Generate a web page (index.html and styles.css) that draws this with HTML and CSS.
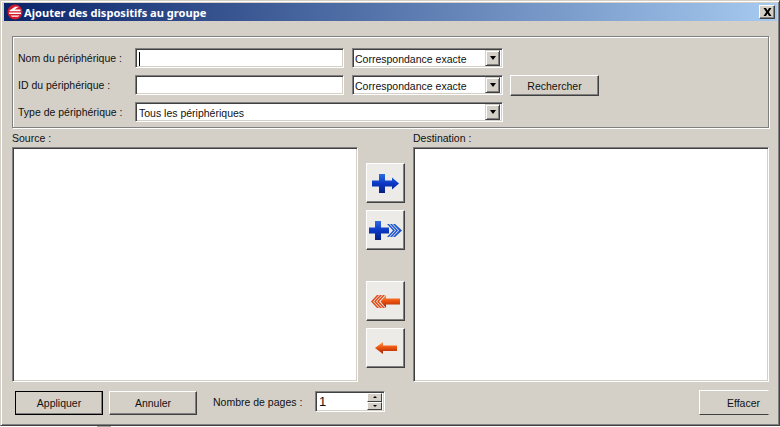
FILE: index.html
```html
<!DOCTYPE html>
<html lang="fr">
<head>
<meta charset="utf-8">
<title>Ajouter des dispositifs au groupe</title>
<link rel="stylesheet" href="styles.css">
</head>
<body>
<div class="window">
  <div class="titlebar">
    <svg class="appicon" width="16" height="16" viewBox="0 0 16 16">
      <circle cx="8" cy="8" r="7.5" fill="#d5182a"/>
      <path d="M2.500 6.500 L8 2.800 L12 2.800 L7.500 5.600 L13.500 5.600 L13.500 7.200 L2.500 7.200 Z M2 8.600 L14 8.600 L14 10 L2 10 Z M3.500 11.400 L12.500 11.400 L11 12.800 L5 12.800 Z" fill="#fff"/>
    </svg>
    <span class="title-text">Ajouter des dispositifs au groupe</span>
    <span class="closebtn">
      <svg width="9" height="8" viewBox="0 0 9 8"><path d="M0.500 0 L3 0 L4.500 2.400 L6 0 L8.500 0 L5.800 4 L8.500 8 L6 8 L4.500 5.600 L3 8 L0.500 8 L3.200 4 Z" fill="#000"/></svg>
    </span>
  </div>
  <div class="content">
    <div class="group">
      <div class="row">
        <label class="lbl">Nom du périphérique :</label>
        <div class="field edit"><span class="caret"></span></div>
        <div class="field combo"><span class="combo-text">Correspondance exacte</span><span class="drop"><i></i></span></div>
      </div>
      <div class="row">
        <label class="lbl">ID du périphérique :</label>
        <div class="field edit"></div>
        <div class="field combo"><span class="combo-text">Correspondance exacte</span><span class="drop"><i></i></span></div>
        <div class="btn search">Rechercher</div>
      </div>
      <div class="row">
        <label class="lbl">Type de périphérique :</label>
        <div class="field combo wide"><span class="combo-text">Tous les périphériques</span><span class="drop"><i></i></span></div>
      </div>
    </div>
    <div class="lists">
      <div class="pane source">
        <div class="pane-label">Source :</div>
        <div class="field listbox"></div>
      </div>
      <div class="arrows">
        <div class="btn arrow">
          <svg width="27" height="19" viewBox="0 0 27 19">
            <defs>
              <linearGradient id="b" x1="0" y1="0" x2="0" y2="1"><stop offset="0" stop-color="#2f6ce0"/><stop offset="0.5" stop-color="#0a38c4"/><stop offset="1" stop-color="#07207f"/></linearGradient>
              <linearGradient id="r" x1="0" y1="0" x2="0" y2="1"><stop offset="0" stop-color="#ff9a50"/><stop offset="0.45" stop-color="#ee5410"/><stop offset="1" stop-color="#9c2606"/></linearGradient>
            </defs>
            <path d="M7 0 H13 V6.500 H20 V3.500 L27 9.500 L20 15.500 V12.500 H13 V19 H7 V12.500 H0 V6.500 H7 Z" fill="url(#b)"/>
          </svg>
        </div>
        <div class="btn arrow">
          <svg width="33" height="19" viewBox="0 0 33 19">
            <path d="M6 0 H12 V6.500 H20 V12.500 H12 V19 H6 V12.500 H0 V6.500 H6 Z" fill="url(#b)"/>
            <path d="M18 3 L24 9.500 L18 16 H20 L26 9.500 L20 3 Z M21 3 L27 9.500 L21 16 H23 L29 9.500 L23 3 Z M24 3 L30 9.500 L24 16 H26 L33 9.500 L26 3 Z" fill="#1d55d0"/>
          </svg>
        </div>
        <div class="arrow-gap"></div>
        <div class="btn arrow">
          <svg width="29" height="13" viewBox="0 0 29 13">
            <path d="M6 0 H8 L2 6.500 L8 13 H6 L0 6.500 Z M9 0 H11 L5 6.500 L11 13 H9 L3 6.500 Z M12 0 H14 L8 6.500 L14 13 H12 L6 6.500 Z" fill="#e04a16"/>
            <path d="M15 0 L9.500 6.500 L15 13 V9.500 H29 V3.500 H15 Z" fill="url(#r)"/>
          </svg>
        </div>
        <div class="btn arrow">
          <svg width="22" height="12" viewBox="0 0 22 12">
            <path d="M8 0 L0 6 L8 12 V9 H22 V3.500 H8 Z" fill="url(#r)"/>
          </svg>
        </div>
      </div>
      <div class="pane dest">
        <div class="pane-label">Destination :</div>
        <div class="field listbox"></div>
      </div>
    </div>
    <div class="footer">
      <div class="btn default">Appliquer</div>
      <div class="btn action">Annuler</div>
      <span class="pages-label">Nombre de pages :</span>
      <div class="field spinner">
        <span class="spin-value">1</span>
        <span class="spin-btns">
          <span class="spin up"><i></i></span>
          <span class="spin down"><i></i></span>
        </span>
      </div>
      <div class="btn clear">Effacer</div>
    </div>
  </div>
</div>
<span class="page-mark"></span>
</body>
</html>
```
FILE: styles.css
```css
* { box-sizing: border-box; }
html, body { margin: 0; padding: 0; background: #fff; }
body {
  position: relative;
  width: 780px;
  height: 427px;
  overflow: hidden;
  font-family: "Liberation Sans", Arial, sans-serif;
  font-size: 10.5px;
  color: #111;
}
.window {
  width: 780px;
  height: 426px;
  background: #d4d0c8;
  border-top: 1px solid #d4d0c8;
  border-left: 1px solid #d4d0c8;
  border-right: 1px solid #404040;
  border-bottom: 1px solid #404040;
  box-shadow: inset 1px 1px 0 #fff, inset -1px -1px 0 #808080;
  padding: 2px 2px 0 3px;
  display: flex;
  flex-direction: column;
}
.titlebar {
  height: 18px;
  flex: none;
  background: linear-gradient(to right, #0a246a, #a6caf0);
  display: flex;
  align-items: center;
  padding: 0 2px 0 3px;
  color: #fff;
  font-family: "Noto Sans", sans-serif;
  font-weight: 700;
  font-size: 11.1px;
}
.appicon { flex: none; margin-right: 1px; }
.title-text { flex: 1; white-space: nowrap; }
.closebtn {
  width: 16px;
  height: 14px;
  background: #d4d0c8;
  border-top: 1px solid #fff;
  border-left: 1px solid #fff;
  border-right: 1px solid #404040;
  border-bottom: 1px solid #404040;
  box-shadow: inset -1px -1px 0 #808080;
  display: flex;
  align-items: center;
  justify-content: center;
}
.content {
  flex: 1;
  display: flex;
  flex-direction: column;
  padding: 15px 8px 0 8px;
}
.group {
  height: 92px;
  flex: none;
  border: 1px solid #808080;
  box-shadow: 1px 1px 0 #fff, inset 1px 1px 0 #fff;
  padding: 11px 0 0 0;
  display: flex;
  flex-direction: column;
  gap: 7px;
}
.row { height: 20px; display: flex; align-items: center; }
.lbl { width: 122px; padding: 0 0 1px 5px; white-space: nowrap; flex: none; }
.field {
  background: #fff;
  border-top: 1px solid #808080;
  border-left: 1px solid #808080;
  border-right: 1px solid #fff;
  border-bottom: 1px solid #fff;
  box-shadow: inset 1px 1px 0 #404040, inset -1px -1px 0 #d4d0c8;
}
.edit { width: 209px; height: 20px; padding: 3px 0 0 3px; margin-right: 8px; }
.caret { display: block; width: 1px; height: 14px; background: #000; }
.combo {
  width: 151px;
  height: 20px;
  display: flex;
  align-items: center;
  justify-content: space-between;
  padding: 2px;
}
.combo.wide { width: 368px; }
.combo-text { white-space: nowrap; padding-top: 1px; }
.combo.wide .combo-text { padding-left: 1px; }
.drop {
  width: 15px;
  height: 16px;
  background: #d4d0c8;
  border-top: 1px solid #d4d0c8;
  border-left: 1px solid #d4d0c8;
  border-right: 1px solid #404040;
  border-bottom: 1px solid #404040;
  box-shadow: inset 1px 1px 0 #fff, inset -1px -1px 0 #808080;
  display: flex;
  align-items: center;
  justify-content: center;
}
.drop i {
  width: 0;
  height: 0;
  border-left: 3.5px solid transparent;
  border-right: 3.5px solid transparent;
  border-top: 4px solid #000;
}
.btn {
  background: #d4d0c8;
  border-top: 1px solid #fff;
  border-left: 1px solid #fff;
  border-right: 1px solid #404040;
  border-bottom: 1px solid #404040;
  box-shadow: inset -1px -1px 0 #808080;
  display: flex;
  align-items: center;
  justify-content: center;
  white-space: nowrap;
}
.search { width: 89px; height: 21px; margin-left: 7px; align-self: flex-start; }
.lists { flex: none; height: 253px; display: flex; margin-top: 5px; }
.pane { display: flex; flex-direction: column; }
.pane-label { height: 14px; line-height: 11px; }
.source { width: 346px; }
.dest { width: 356px; margin-left: 8px; }
.pane .listbox { flex: none; height: 235px; }
.arrows {
  width: 39px;
  margin-left: 8px;
  padding-top: 30px;
  display: flex;
  flex-direction: column;
  gap: 7px;
  flex: none;
}
.arrow {
  width: 39px;
  height: 40px;
  background: #ecebe8;
}
.arrow-gap { height: 17px; }
.footer {
  flex: none;
  display: flex;
  align-items: flex-start;
  margin-top: 4px;
  padding-left: 3px;
  height: 26px;
}
.default {
  width: 88px;
  height: 24px;
  margin-top: 1px;
  outline: 1px solid #000;
  outline-offset: -1px;
}
.action { width: 88px; height: 24px; margin: 1px 0 0 6px; }
.pages-label { margin: 6px 0 0 16px; width: 102px; white-space: nowrap; }
.spinner {
  width: 70px;
  height: 21px;
  margin-top: 1px;
  display: flex;
  align-items: center;
  padding: 2px;
}
.spin-value { flex: 1; padding-left: 1px; font-size: 13px; }
.spin-btns { width: 15px; height: 17px; display: flex; flex-direction: column; }
.spin {
  flex: 1;
  background: #d4d0c8;
  border-top: 1px solid #fff;
  border-left: 1px solid #fff;
  border-right: 1px solid #404040;
  border-bottom: 1px solid #404040;
  display: flex;
  align-items: center;
  justify-content: center;
}
.spin i { width: 0; height: 0; border-left: 2px solid transparent; border-right: 2px solid transparent; }
.up i { border-bottom: 2px solid #000; }
.down i { border-top: 2px solid #000; }
.clear {
  width: 70px;
  height: 25px;
  margin-left: auto;
  justify-content: flex-end;
  padding-right: 8px;
  border-right-color: #d4d0c8;
  box-shadow: none;
}
.page-mark {
  position: absolute;
  left: 97px;
  top: 426px;
  width: 14px;
  height: 1px;
  background: #a8a8a0;
}
```
